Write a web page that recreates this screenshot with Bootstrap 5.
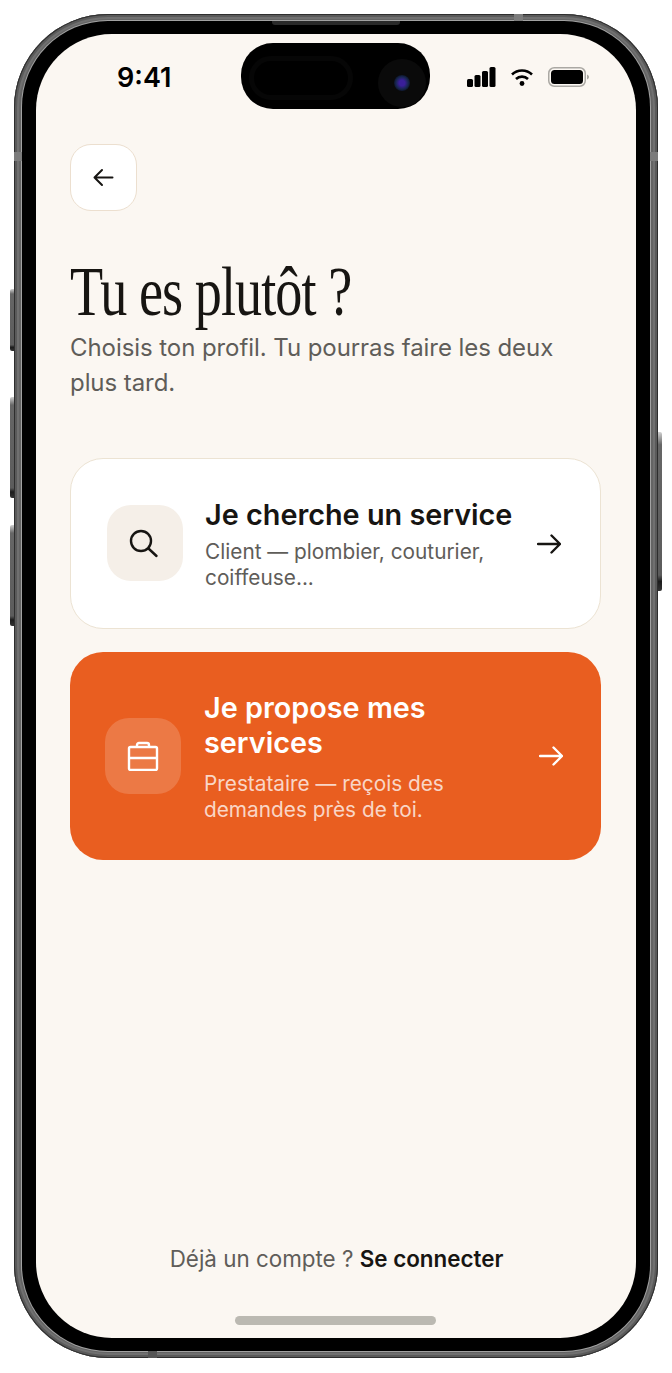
<!DOCTYPE html>
<html lang="fr">

<head>
    <meta charset="UTF-8">
    <meta name="viewport" content="width=device-width, initial-scale=1.0">
    <title>Tu es plutôt ?</title>
    <link href="https://cdn.jsdelivr.net/npm/bootstrap@5.3.2/dist/css/bootstrap.min.css" rel="stylesheet">
    <script src="https://cdn.jsdelivr.net/npm/bootstrap@5.3.2/dist/js/bootstrap.bundle.min.js"></script>
    <style>
        html, body { background: #fff; font-family: "Inter", sans-serif; }
        body { width: 672px; height: 1373px; overflow: hidden; padding: 14px 14px 15px; }

        /* phone body */
        .phone-metal {
            width: 644px; height: 1344px; border-radius: 94px; padding: 7px 8px;
            background: #646464;
            box-shadow: inset 0 0 0 1px #2e2e2e, inset 0 0 0 3px #5a5a5a, inset 0 0 0 5px #707070;
        }
        .phone-bezel {
            height: 100%; border-radius: 86px; padding: 13px 14px; background: #000;
            box-shadow: 0 0 0 1px #a2a2a2;
        }
        .phone-screen {
            height: 100%; border-radius: 76px; background: #fbf7f2;
            padding: 0 35px 13px 34px; overflow: hidden;
        }
        .side-key { width: 4px; background: linear-gradient(180deg, #d0d0d0 0, #666 8%, #5c5c5c 90%, #1c1c1c 94%, #333 100%); border-radius: 2px 0 0 2px; }
        .key-a { left: 10px; top: 289px; height: 62px; }
        .key-b { left: 10px; top: 397px; height: 101px; }
        .key-c { left: 10px; top: 525px; height: 101px; }
        .key-d { left: 658px; top: 432px; height: 159px; border-radius: 0 2px 2px 0; }
        .seam { background: #7c7c7c; }
        .seam-tl { left: 14px; top: 152px; width: 8px; height: 9px; }
        .seam-tr { left: 650px; top: 152px; width: 8px; height: 9px; }
        .seam-t { left: 514px; top: 14px; width: 9px; height: 7px; }
        .seam-b { left: 148px; top: 1351px; width: 9px; height: 7px; background: #555; }
        .speaker { left: 272px; top: 21px; width: 128px; height: 4px; background: #2a2a2a; border-radius: 0 0 3px 3px; }

        /* status bar */
        .status-row { height: 110px; color: #000; }
        .status-time { font-size: 27px; font-weight: 600; width: 55px; margin-left: 47px; line-height: 1; margin-top: 30px; }
        .status-icons { margin-right: 12px; margin-top: 33px; gap: 15px; }
        .island {
            left: 241px; top: 43px; width: 189px; height: 66px; background: #000; border-radius: 32px;
        }
        .island-sensor { left: 8px; top: 13px; width: 104px; height: 44px; border: 5px solid #060606; border-radius: 22px; }
        .island-lens { left: 137px; top: 16px; width: 48px; height: 48px; background: #0a0a0a; border-radius: 50%; }
        .island-eye {
            left: 153px; top: 32px; width: 16px; height: 16px; border-radius: 50%;
            background: radial-gradient(circle, #3a1f9a 0 25%, #17264e 55%, #05070d 85%);
        }

        /* page */
        .back-btn {
            width: 67px; height: 67px; background: #fff; border: 1px solid #ecdfcf; border-radius: 21px;
        }
        .page-title {
            font-family: "Liberation Serif", serif; font-weight: 400; font-size: 69px; line-height: 70px;
            color: #171512; margin: 46px 0 0; white-space: nowrap; letter-spacing: -1.2px;
            transform: scaleX(.785); transform-origin: left center;
        }
        .page-sub { font-size: 24px; line-height: 35px; color: #5f5d59; margin: 3px 0 58px; letter-spacing: -.07px; }

        .choice {
            border-radius: 33px; padding-left: 36px; padding-right: 39px; gap: 22px;
        }
        .choice-client { height: 171px; background: #fff; border: 1px solid #ece3d3; }
        .choice-client .choice-icon { margin-bottom: 1px; }
        .choice-pro { height: 208px; background: #e95e20; color: #fff; padding-left: 35px; padding-right: 38px; margin-top: 23px; gap: 23px; }
        .choice-icon { width: 76px; height: 76px; border-radius: 24px; background: #f5efe8; flex: none; }
        .choice-pro .choice-icon { background: rgba(255, 255, 255, .17); }
        .choice-name { font-size: 28.8px; font-weight: 600; line-height: 35px; color: #171512; }
        .choice-pro .choice-name { color: #fff; }
        .choice-note { font-size: 20.8px; line-height: 26px; color: #5f5d59; margin-top: 7px; }
        .choice-pro .choice-note { color: rgba(255, 255, 255, .75); margin-top: 11px; }

        .foot-line { font-size: 22.4px; color: #5f5d59; line-height: 30px; margin-bottom: 42px; padding-left: 2px; }
        .foot-line b { font-weight: 600; color: #171512; }
        .home-bar { width: 201px; height: 9px; border-radius: 4.5px; background: #bbb9b2; }
    </style>
</head>

<body class="position-relative">
    <div class="side-key position-absolute key-a"></div>
    <div class="side-key position-absolute key-b"></div>
    <div class="side-key position-absolute key-c"></div>
    <div class="side-key position-absolute key-d"></div>

    <div class="phone-metal">
        <div class="phone-bezel">
            <div class="phone-screen d-flex flex-column">

                <div class="status-row d-flex justify-content-between align-items-start">
                    <div class="status-time">9:41</div>
                    <div class="status-icons d-flex align-items-center">
                        <svg width="29" height="20" viewBox="0 0 29 20"><rect x="0" y="12" width="6" height="8" rx="1.5"/><rect x="7.5" y="8" width="6" height="12" rx="1.5"/><rect x="15" y="4" width="6" height="16" rx="1.5"/><rect x="22.500" y="0" width="6" height="20" rx="1.5"/></svg>
                        <svg width="22" height="18" viewBox="0 0 22 18" fill="none" stroke="#000" stroke-width="2.600"><path d="M1 6.500a14.500 14.500 0 0 1 20 0"/><path d="M5 11a8.700 8.700 0 0 1 12 0"/><circle cx="11" cy="15.500" r="2.400" fill="#000" stroke="none"/></svg>
                        <svg width="41" height="20" viewBox="0 0 41 20"><rect x=".75" y=".75" width="36.500" height="18.500" rx="5.500" fill="none" stroke="#aaa8a3" stroke-width="1.500"/><rect x="3" y="3" width="32" height="14" rx="3.500"/><path d="M39 7.500c1.200.4 2 1.400 2 2.500s-.8 2.100-2 2.500z" fill="#aaa8a3"/></svg>
                    </div>
                </div>

                <button type="button" class="back-btn btn p-0 d-flex align-items-center justify-content-center" aria-label="Retour">
                    <svg width="24" height="24" viewBox=".5 .5 24 24" fill="none" stroke="#171512" stroke-width="2" stroke-linecap="round" stroke-linejoin="round"><path d="M21 12H3M10.500 4.500 3 12l7.500 7.500"/></svg>
                </button>

                <h1 class="page-title">Tu es plutôt ?</h1>
                <p class="page-sub">Choisis ton profil. Tu pourras faire les deux plus tard.</p>

                <a href="#" class="choice choice-client d-flex align-items-center text-decoration-none">
                    <div class="choice-icon d-flex align-items-center justify-content-center">
                        <svg width="32" height="32" viewBox="0 0 32 32" fill="none" stroke="#171512" stroke-width="2.400" stroke-linecap="round"><circle cx="12" cy="14" r="10"/><path d="M20 22l7.500 7"/></svg>
                    </div>
                    <div class="flex-grow-1">
                        <div class="choice-name">Je cherche un service</div>
                        <div class="choice-note">Client — plombier, couturier, coiffeuse...</div>
                    </div>
                    <svg class="flex-shrink-0" width="24" height="20" viewBox="0 0 24 20" fill="none" stroke="#171512" stroke-width="2.400" stroke-linecap="round" stroke-linejoin="round"><path d="M1 10h22M14.500 1.500 23 10l-8.500 8.500"/></svg>
                </a>

                <a href="#" class="choice choice-pro d-flex align-items-center text-decoration-none">
                    <div class="choice-icon d-flex align-items-center justify-content-center">
                        <svg width="32" height="30" viewBox="0 0 32 30" fill="none" stroke="#fff" stroke-width="2.400" stroke-linejoin="round"><rect x="2" y="6" width="28" height="23" rx="1.500"/><path d="M2 17h28M10 6V4a2 2 0 0 1 2-2h8a2 2 0 0 1 2 2v2"/></svg>
                    </div>
                    <div class="flex-grow-1">
                        <div class="choice-name">Je propose mes services</div>
                        <div class="choice-note">Prestataire — reçois des demandes près de toi.</div>
                    </div>
                    <svg class="flex-shrink-0" width="24" height="20" viewBox="0 0 24 20" fill="none" stroke="#fff" stroke-width="2.400" stroke-linecap="round" stroke-linejoin="round"><path d="M1 10h22M14.500 1.500 23 10l-8.500 8.500"/></svg>
                </a>

                <div class="foot-line text-center mt-auto">Déjà un compte ? <b>Se connecter</b></div>
                <div class="home-bar align-self-center"></div>
            </div>
        </div>
    </div>

    <div class="seam position-absolute seam-tl"></div>
    <div class="seam position-absolute seam-tr"></div>
    <div class="seam position-absolute seam-t"></div>
    <div class="seam position-absolute seam-b"></div>
    <div class="speaker position-absolute"></div>

    <div class="island position-absolute">
        <div class="island-sensor position-absolute"></div>
        <div class="island-lens position-absolute"></div>
        <div class="island-eye position-absolute"></div>
    </div>
</body>

</html>
